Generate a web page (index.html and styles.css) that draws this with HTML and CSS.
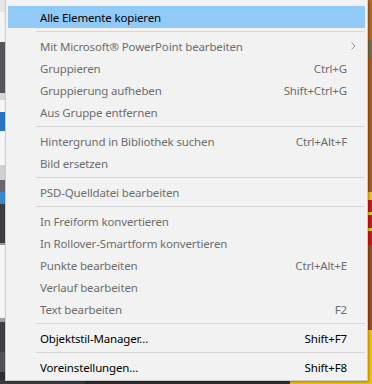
FILE: index.html
```html
<!DOCTYPE html>
<html>
<head>
    <title>Kontextmenü</title>
    <link rel="stylesheet" href="styles.css">
</head>
<body>
    <div class="desktop">
        <ul class="menu">
            <li class="item active">
                <span class="label">Alle Elemente kopieren</span>
            </li>
            <li class="sep"></li>
            <li class="item disabled">
                <span class="label">Mit Microsoft® PowerPoint bearbeiten</span>
                <svg class="arrow" width="5" height="8" viewBox="0 0 5 8"><polyline points="0.5,0.5 4,4 0.5,7.5" fill="none" stroke="#9a9a9a" stroke-width="1"/></svg>
            </li>
            <li class="item disabled">
                <span class="label">Gruppieren</span>
                <span class="key">Ctrl+G</span>
            </li>
            <li class="item disabled">
                <span class="label">Gruppierung aufheben</span>
                <span class="key">Shift+Ctrl+G</span>
            </li>
            <li class="item disabled">
                <span class="label">Aus Gruppe entfernen</span>
            </li>
            <li class="sep"></li>
            <li class="item disabled">
                <span class="label">Hintergrund in Bibliothek suchen</span>
                <span class="key">Ctrl+Alt+F</span>
            </li>
            <li class="item disabled">
                <span class="label">Bild ersetzen</span>
            </li>
            <li class="sep"></li>
            <li class="item disabled">
                <span class="label">PSD-Quelldatei bearbeiten</span>
            </li>
            <li class="sep"></li>
            <li class="item disabled">
                <span class="label">In Freiform konvertieren</span>
            </li>
            <li class="item disabled">
                <span class="label">In Rollover-Smartform konvertieren</span>
            </li>
            <li class="item disabled">
                <span class="label">Punkte bearbeiten</span>
                <span class="key">Ctrl+Alt+E</span>
            </li>
            <li class="item disabled">
                <span class="label">Verlauf bearbeiten</span>
            </li>
            <li class="item disabled">
                <span class="label">Text bearbeiten</span>
                <span class="key">F2</span>
            </li>
            <li class="sep"></li>
            <li class="item">
                <span class="label">Objektstil-Manager...</span>
                <span class="key">Shift+F7</span>
            </li>
            <li class="sep"></li>
            <li class="item">
                <span class="label">Voreinstellungen...</span>
                <span class="key">Shift+F8</span>
            </li>
        </ul>
    </div>
</body>
</html>
```

FILE: styles.css
```css
body {
    margin: 0;
    font-family: "Noto Sans", "Open Sans", sans-serif;
}

.desktop {
    position: relative;
    width: 372px;
    height: 384px;
    overflow: hidden;
    background:
        linear-gradient(to right, #3a3a40 0 85px, #2e2e2e 85px 290px, #f0c000 290px) 0 380px / 100% 4px no-repeat,
        linear-gradient(to bottom,
            #e6e6e6 0 12px, #f4f4f4 12px 42px, #55555c 42px 93px, #d8d8d8 93px 100px,
            #f6f6f6 100px 112px, #2a72c4 112px 131px, #f6f6f6 131px 165px, #d0d0d0 165px 180px,
            #66666c 180px 192px, #3a86d0 192px 204px, #3c3c44 204px 243px, #9a9a9a 243px 245px,
            #f6f6f6 245px 318px, #a0a0a0 318px 322px, #3e3e46 322px 352px, #505058 352px 372px,
            #2d2d33 372px) 0 0 / 6px 100% no-repeat,
        linear-gradient(to bottom,
            #b5651d 0 40px, #7d6a3a 40px 58px, #a65a1c 58px 192px, #f0c020 192px 200px,
            #cc1a10 200px 212px, #f0c020 212px 215px, #cc1a10 215px 228px, #f0c020 228px 231px,
            #cc1a10 231px 245px, #9a4a1a 245px 330px, #f2c200 330px) 366px 0 / 6px 100% no-repeat,
        #888;
}

.menu {
    position: absolute;
    left: 5px;
    top: 0;
    width: 357px;
    margin: 0;
    padding: 6px 2px 2px 2px;
    list-style: none;
    background-color: #f2f2f2;
    border-left: 1px solid #cccccc;
    border-right: 1px solid #cccccc;
    border-bottom: 1px solid #cccccc;
    box-shadow: 1px 1px 2px rgba(0, 0, 0, 0.3);
}

.item {
    display: flex;
    align-items: center;
    height: 22px;
    padding: 0 18px 0 32px;
    font-size: 11.5px;
    letter-spacing: -0.15px;
    color: #000;
}

.item.active {
    background-color: #91c9f7;
}

.item.disabled {
    color: #6d6d6d;
}

.label {
    flex: 1;
    white-space: nowrap;
}

.key {
    white-space: nowrap;
}

.arrow {
    margin-right: -9px;
}

.sep {
    height: 1px;
    margin: 3px 0 3px 28px;
    background-color: #d7d7d7;
}
```
